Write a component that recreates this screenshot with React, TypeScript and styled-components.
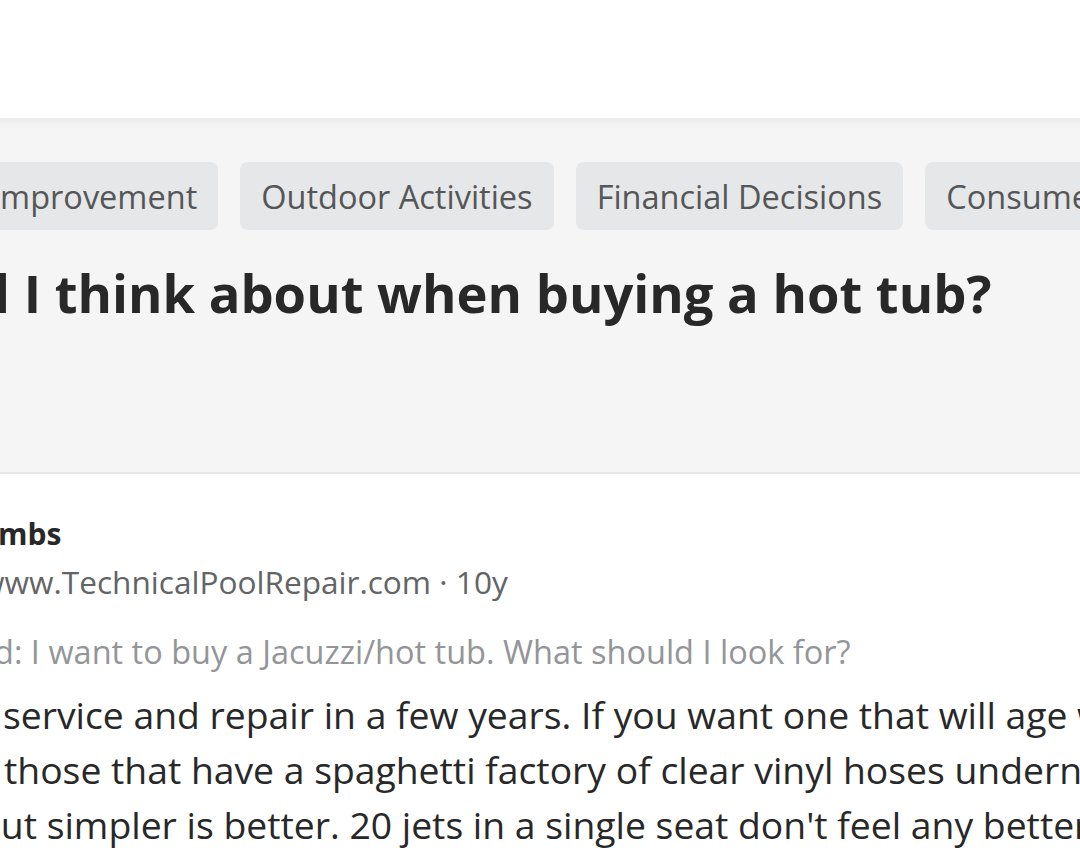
import styled, { createGlobalStyle } from "styled-components";

const GlobalStyle = createGlobalStyle`
  html, body {
    margin: 0;
    padding: 0;
    background: #ffffff;
    overflow: hidden;
  }
  body {
    font-family: "Open Sans", "Noto Sans", "Liberation Sans", sans-serif;
    color: #282829;
  }
`;

const Page = styled.div`
  width: 1080px;
  height: 863px;
  padding-top: 118px;
  box-sizing: border-box;
  overflow: hidden;
`;

const QuestionHeader = styled.header`
  background: #f5f5f5;
  border-top: 1px solid #ececec;
  border-bottom: 2px solid #e8e8e8;
  box-shadow: inset 0 10px 10px -8px rgba(0, 0, 0, 0.06);
  height: 356px;
  box-sizing: border-box;
  padding-top: 43px;
`;

const TopicRow = styled.div`
  display: flex;
  gap: 22px;
  margin-left: -9px;
  white-space: nowrap;
`;

const Topic = styled.span<{ $first?: boolean }>`
  flex: none;
  height: 68px;
  display: flex;
  align-items: center;
  padding: 0 21px;
  padding-left: ${(p) => (p.$first ? "0" : "21px")};
  background: #e6e7e8;
  border-radius: 8px;
  font-size: 32.5px;
  color: #555657;
`;

const Title = styled.h1`
  margin: 28px 0 0 -6px;
  font-size: 52.5px;
  font-weight: 700;
  line-height: 70px;
  color: #282829;
  white-space: nowrap;
`;

const Answer = styled.section`
  padding-top: 40px;
  white-space: nowrap;
`;

const Author = styled.div`
  font-size: 30px;
  font-weight: 700;
  line-height: 40px;
  margin-left: -2px;
`;

const Meta = styled.div`
  margin-top: 5px;
  font-size: 31.6px;
  line-height: 46px;
  color: #636466;
  margin-left: -20px;
`;

const AskedFor = styled.div`
  margin-top: 25px;
  font-size: 32.5px;
  line-height: 44px;
  color: #939598;
  margin-left: -6px;
`;

const Body = styled.div`
  margin-top: 13px;
  font-size: 37.3px;
  line-height: 55px;
  color: #282829;
`;

const Line = styled.div<{ $shift?: number }>`
  margin-left: ${(p) => p.$shift ?? 0}px;
`;

const topics = ["Improvement", "Outdoor Activities", "Financial Decisions", "Consumer Goods"];

const bodyLines = [
  { text: "service and repair in a few years. If you want one that will age well,", shift: 3 },
  { text: "those that have a spaghetti factory of clear vinyl hoses underneath,", shift: 4 },
  { text: "but simpler is better. 20 jets in a single seat don't feel any better", shift: -22 },
];

export default function App() {
  return (
    <>
      <GlobalStyle />
      <Page>
        <QuestionHeader>
          <TopicRow>
            {topics.map((t, i) => (
              <Topic key={t} $first={i === 0}>{t}</Topic>
            ))}
          </TopicRow>
          <Title>l I think about when buying a hot tub?</Title>
        </QuestionHeader>
        <Answer>
          <Author>mbs</Author>
          <Meta>www.TechnicalPoolRepair.com · 10y</Meta>
          <AskedFor>d: I want to buy a Jacuzzi/hot tub. What should I look for?</AskedFor>
          <Body>
            {bodyLines.map((l) => (
              <Line key={l.text} $shift={l.shift}>{l.text}</Line>
            ))}
          </Body>
        </Answer>
      </Page>
    </>
  );
}
